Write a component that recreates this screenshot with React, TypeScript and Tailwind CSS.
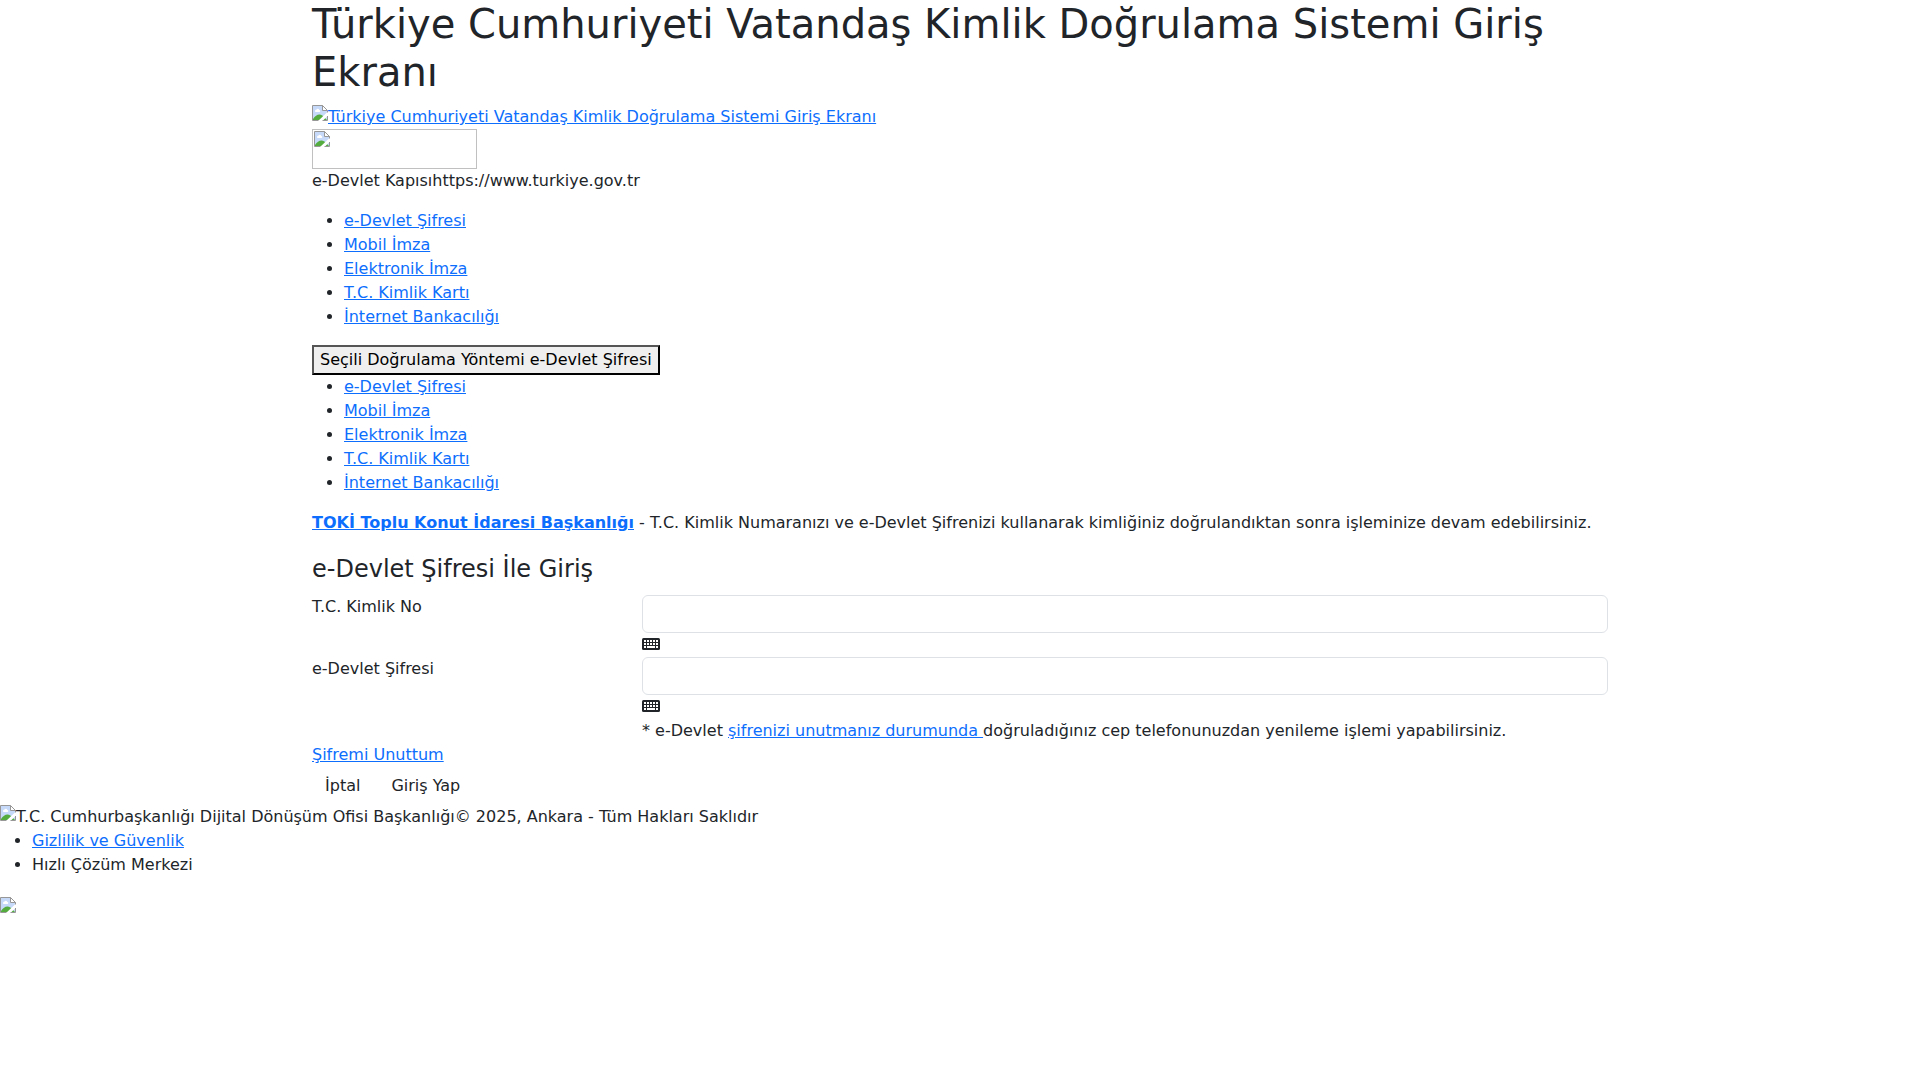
import React from "react";

const methods = [
  "e-Devlet Şifresi",
  "Mobil İmza",
  "Elektronik İmza",
  "T.C. Kimlik Kartı",
  "İnternet Bankacılığı",
];

const linkClass = "text-[#0d6efd] underline";

function MissingImage() {
  return (
    <svg width="16" height="16" viewBox="0 0 16 16" aria-hidden="true" className="shrink-0">
      <path d="M1 1H10.5L15 5.5V15H1Z" fill="#c6d9f8" />
      <path d="M3 6a1.500 1.500 0 0 1 1.500-1.500a1.500 1.500 0 0 1 2.800 0.500a1 1 0 0 1 0 2H3.500A1 1 0 0 1 3 6Z" fill="#fff" />
      <path d="M1 15V14C3 11 5 9.500 7.500 9.500C9.500 9.500 10.500 10.500 11.500 11.500L15 15Z" fill="#53ac3d" />
      <path d="M6 16L16 6.500V10.500L10.500 16Z" fill="#fff" />
      <path d="M0.500 15.500V0.500H10.500L15.500 5.500V7.500M0.500 15.500H6.500M10.500 15.500H15.500V11" fill="none" stroke="#979797" />
      <path d="M10.500 0.500V5.500H15.500Z" fill="#fff" stroke="#979797" />
    </svg>
  );
}

function KeyboardIcon() {
  return (
    <svg width="18" height="12" viewBox="0 0 18 12" aria-hidden="true">
      <rect width="18" height="12" rx="1.5" fill="#212529" />
      <path
        d="M2 2h2v2H2zM5 2h2v2H5zM8 2h2v2H8zM11 2h2v2h-2zM14 2h2v2h-2zM2 5h2v2H2zM5 5h2v2H5zM8 5h2v2H8zM11 5h2v2h-2zM14 5h2v2h-2zM2 8h2v2H2zM5 8h8v2H5zM14 8h2v2h-2z"
        fill="#fff"
      />
    </svg>
  );
}

function MethodList() {
  return (
    <ul className="mb-4 list-disc pl-8">
      {methods.map((m) => (
        <li key={m}>
          <a href="#" className={linkClass}>{m}</a>
        </li>
      ))}
    </ul>
  );
}

function Field({ id, label, type }: { id: string; label: string; type: string }) {
  return (
    <div className="grid grid-cols-[330px_1fr]">
      <label htmlFor={id} className="self-start">{label}</label>
      <div>
        <input
          id={id}
          type={type}
          className="block h-[38px] w-full rounded-md border border-[#dee2e6] bg-white px-3"
        />
        <button type="button" aria-label={label + " sanal klavye"} className="flex h-6 items-start pt-[5px]">
          <KeyboardIcon />
        </button>
      </div>
    </div>
  );
}

export default function App() {
  return (
    <div className="min-h-screen bg-white font-['DejaVu_Sans',sans-serif] text-base leading-6 text-[#212529]">
      <main className="mx-auto max-w-[1320px] px-3">
        <header>
          <h1 className="mb-2 text-[40px] leading-12">
            Türkiye Cumhuriyeti Vatandaş Kimlik Doğrulama Sistemi Giriş Ekranı
          </h1>
          <a href="#" className={"flex items-start pt-px " + linkClass}>
            <MissingImage />
            <span>Türkiye Cumhuriyeti Vatandaş Kimlik Doğrulama Sistemi Giriş Ekranı</span>
          </a>
          <div className="h-10 w-[165px] border border-[#c0c0c0] p-px">
            <MissingImage />
          </div>
          <p className="mb-4">e-Devlet Kapısıhttps://www.turkiye.gov.tr</p>
        </header>
        <nav>
          <MethodList />
          <button
            type="button"
            className="block border-2 border-t-[#555] border-r-black border-b-black border-l-[#555] bg-[#efefef] px-1.5 py-px text-black"
          >
            Seçili Doğrulama Yöntemi e-Devlet Şifresi
          </button>
          <MethodList />
        </nav>
        <p className="mb-4">
          <a href="#" className={"font-bold " + linkClass}>TOKİ Toplu Konut İdaresi Başkanlığı</a>
          {" - T.C. Kimlik Numaranızı ve e-Devlet Şifrenizi kullanarak kimliğiniz doğrulandıktan sonra işleminize devam edebilirsiniz."}
        </p>
        <form>
          <h2 className="mb-3 pt-1 text-2xl leading-7">e-Devlet Şifresi İle Giriş</h2>
          <Field id="tc" label="T.C. Kimlik No" type="text" />
          <Field id="sifre" label="e-Devlet Şifresi" type="password" />
          <p className="pl-[330px]">
            {"* e-Devlet "}
            <a href="#" className={linkClass}>{"şifrenizi unutmanız durumunda "}</a>
            doğruladığınız cep telefonunuzdan yenileme işlemi yapabilirsiniz.
          </p>
          <a href="#" className={"block w-fit " + linkClass}>Şifremi Unuttum</a>
          <div className="flex gap-[5px]">
            <button type="button" className="px-[13px] py-[7px]">İptal</button>
            <button type="button" className="px-[13px] py-[7px]">Giriş Yap</button>
          </div>
        </form>
      </main>
      <footer>
        <div className="flex items-start">
          <MissingImage />
          <span>T.C. Cumhurbaşkanlığı Dijital Dönüşüm Ofisi Başkanlığı© 2025, Ankara - Tüm Hakları Saklıdır</span>
        </div>
        <ul className="mb-5 list-disc pl-8">
          <li><a href="#" className={linkClass}>Gizlilik ve Güvenlik</a></li>
          <li>Hızlı Çözüm Merkezi</li>
        </ul>
        <MissingImage />
      </footer>
    </div>
  );
}
